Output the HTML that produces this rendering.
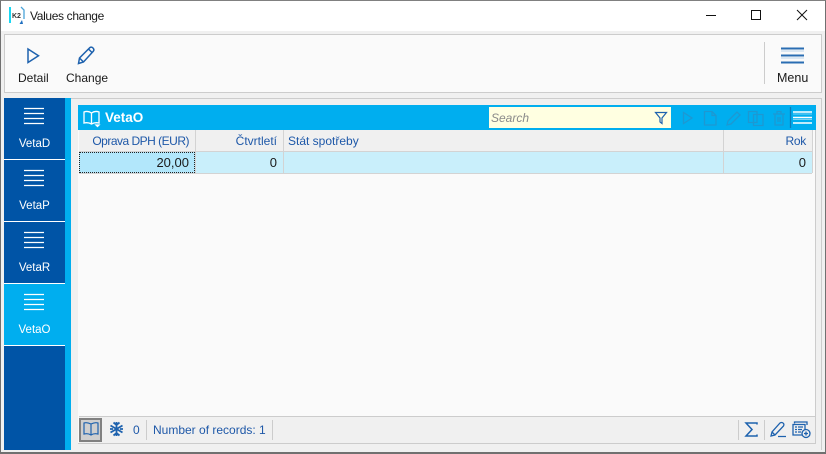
<!DOCTYPE html>
<html><head><meta charset="utf-8">
<style>
html,body{margin:0;padding:0;width:826px;height:454px;overflow:hidden;background:#f0f0f0}
body{position:relative;font-family:"Liberation Sans",sans-serif;font-size:12px;color:#1a1a1a}
.a,.t{position:absolute}
.t{white-space:nowrap;line-height:16px}
svg{position:absolute;overflow:visible}
.blue{color:#1e58a8}
.side{position:absolute;left:4px;width:61px;height:61px;border-bottom:1px solid #fff;color:#fff;text-align:center;font-size:11.5px}
.side .t{left:0;width:61px;top:38px}
.side svg{left:20px;top:10px}
</style></head><body>
<div class="a" style="left:0;top:0;width:826px;height:454px;box-sizing:border-box;border:1px solid #707070;border-bottom:2px solid #707070;border-top:1px solid #808080;z-index:9"></div>
<div class="a" style="left:1px;top:1px;width:824px;height:30px;background:#fff"></div>
<svg style="left:9px;top:6px" width="16" height="18" viewBox="0 0 16 18">
<rect x="0" y="1" width="2" height="16" fill="#19d7f2"/>
<path d="M12 1l3 3v9" fill="none" stroke="#4aa3d8" stroke-width="1.300"/>
<path d="M13 14l-2.500 4h3.500z" fill="#1e6fc0"/>
<text x="3" y="12" font-family="Liberation Sans" font-size="7" font-weight="bold" fill="#333">K2</text>
</svg>
<div class="t" style="left:30px;top:8px;letter-spacing:-.35px">Values change</div>
<svg style="left:706px;top:9px" width="110" height="14" fill="none" stroke="#111" stroke-width="1">
<path d="M0 6.500H10"/><rect x="45.500" y="1.500" width="9" height="9"/><path d="M91 1l10 10M101 1L91 11"/>
</svg>

<div class="a" style="left:4px;top:34px;width:816px;height:57px;background:#fafafa;border:1px solid #ccc"></div>
<svg style="left:27px;top:48px" width="14" height="16" fill="none" stroke="#1e62ae" stroke-width="1.500"><path d="M1 1V14.500L11.500 7.800Z"/></svg>
<svg style="left:77px;top:46px" width="20" height="20" fill="none" stroke="#1e62ae" stroke-width="1.500"><path d="M1.500 17.500l1-5.500L13 1.500q1.500-1 3 .5t.5 3L6.500 16ZM2.500 12l4 4M11.500 3l4 4"/></svg>
<div class="t" style="left:18px;top:70px">Detail</div>
<div class="t" style="left:66px;top:70px">Change</div>
<div class="a" style="left:764px;top:42px;width:1px;height:42px;background:#ccc"></div>
<svg style="left:781px;top:48px" width="24" height="16"><path d="M0 .5H23M0 7.500H23M0 14.500H23" stroke="#2a6db3" stroke-width="2" fill="none"/><path d="M0 3H23M0 10H23" stroke="#bcd4ea" stroke-width="1"/></svg>
<div class="t" style="left:777px;top:70px;font-size:12.500px">Menu</div>

<div class="a" style="left:4px;top:98px;width:61px;height:352px;background:#0054a6"></div>
<div class="a" style="left:65px;top:98px;width:6px;height:352px;background:#00aeef"></div>
<div class="a" style="left:71px;top:98px;width:751px;height:352px;background:#f0f0f0;border-top:1px solid #ccc;border-right:1px solid #ccc;box-sizing:border-box"></div>

<div class="side" style="top:98px"><svg width="21" height="18" stroke="#fff" stroke-width="1.200" fill="none"><path d="M0 .5H20M0 5.500H20M0 10.500H20M0 15.500H20"/></svg><div class="t">VetaD</div></div>
<div class="side" style="top:160px"><svg width="21" height="18" stroke="#fff" stroke-width="1.200" fill="none"><path d="M0 .5H20M0 5.500H20M0 10.500H20M0 15.500H20"/></svg><div class="t">VetaP</div></div>
<div class="side" style="top:222px"><svg width="21" height="18" stroke="#fff" stroke-width="1.200" fill="none"><path d="M0 .5H20M0 5.500H20M0 10.500H20M0 15.500H20"/></svg><div class="t">VetaR</div></div>
<div class="side" style="top:284px;background:#00aeef"><svg width="21" height="18" stroke="#fff" stroke-width="1.200" fill="none"><path d="M0 .5H20M0 5.500H20M0 10.500H20M0 15.500H20"/></svg><div class="t">VetaO</div></div>

<div class="a" style="left:78px;top:105px;width:738px;height:339px;background:#fafafa;border-right:1px solid #ccc;border-bottom:1px solid #ccc;box-sizing:border-box"></div>
<div class="a" style="left:78px;top:105px;width:738px;height:25px;background:#00aeef"></div>
<svg style="left:83px;top:110px" width="18" height="16" fill="none" stroke="#fff" stroke-width="1.300"><path d="M8.500 3Q5 .5 1 2V13Q5 12 8.500 14Q12 12 16 13V2Q12 .5 8.500 3ZM8.500 3V14M13 15H16L14.500 16.500Z"/></svg>
<div class="t" style="left:105px;top:110px;color:#fff;font-weight:bold;font-size:13.500px">VetaO</div>
<div class="a" style="left:489px;top:107px;width:182px;height:21px;background:#ffffe1"></div>
<div class="t" style="left:491px;top:110px;font-style:italic;color:#8a8a8a">Search</div>
<svg style="left:655px;top:112px" width="12" height="12" fill="none" stroke="#1e62ae" stroke-width="1.200"><path d="M.5 .5H11.500L7 6V11.500L5 10V6Z"/></svg>
<svg style="left:681px;top:110px" width="112" height="16" fill="none" stroke="#1d98d2" stroke-width="1.300">
<path d="M2.500 2.500V13.500L11 8Z"/><path d="M23.500 1.500H31L35 5.500V15H23.500ZM31 1.500V5.500H35"/><path d="M46 15l1-4 9-9 3 3-9 9Z"/><path d="M67.500 1.500H76V12.500H67.500ZM72.500 4.500H82V15.500H72.500Z"/><path d="M92 4H104M94 4V15H102V4M96 4V1.500H100V4M97 7V12M99 7V12"/>
<path d="M109.500 -3V18" stroke="#0f7cb8"/>
</svg>
<svg style="left:793px;top:111px" width="20" height="14"><path d="M0 1H19M0 6.500H19M0 12H19" stroke="#fff" stroke-width="1.600"/><path d="M0 3H19M0 8.500H19" stroke="#7ad3f5" stroke-width="1"/></svg>

<div class="a" style="left:79px;top:130px;width:733px;height:21px;background:#f0f0f0;border-bottom:1px solid #d3d3d3"></div>
<div class="a" style="left:79px;top:152px;width:733px;height:21px;background:#c9effb;border-bottom:1px solid #d3d3d3"></div>
<div class="a" style="left:79px;top:152px;width:116px;height:21px;background:#b2e7fb;outline:1px dotted #222;outline-offset:-1px"></div>
<div class="a" style="left:195px;top:130px;width:1px;height:43px;background:#d3d3d3"></div>
<div class="a" style="left:283px;top:130px;width:1px;height:43px;background:#d3d3d3"></div>
<div class="a" style="left:723px;top:130px;width:1px;height:43px;background:#d3d3d3"></div>
<div class="a" style="left:812px;top:130px;width:1px;height:43px;background:#d3d3d3"></div>
<div class="t blue" style="right:637px;top:133px;letter-spacing:-.5px">Oprava DPH (EUR)</div>
<div class="t blue" style="right:549px;top:133px">Čtvrtletí</div>
<div class="t blue" style="left:288px;top:133px">Stát spotřeby</div>
<div class="t blue" style="right:20px;top:133px;letter-spacing:-.3px">Rok</div>
<div class="t" style="right:637px;top:155px;font-size:13px">20,00</div>
<div class="t" style="right:549px;top:155px;font-size:13px">0</div>
<div class="t" style="right:20px;top:155px;font-size:13px">0</div>

<div class="a" style="left:79px;top:416px;width:736px;height:27px;background:#f0f0f0;border-top:1px solid #ccc;box-sizing:border-box"></div>
<div class="a" style="left:79px;top:418px;width:23px;height:24px;background:#cfcfcf;border:2px solid #808080;box-sizing:border-box"></div>
<svg style="left:83px;top:422px" width="17" height="14" fill="none" stroke="#1e62ae" stroke-width="1.200"><path d="M8 2Q4 0 1 1V12Q5 11 8 13Q11 11 15 12V1Q12 0 8 2ZM8 2V13"/></svg>
<svg style="left:109px;top:421px" width="15" height="16" fill="none" stroke="#1e62ae" stroke-width="1.800"><path d="M7.500 1V15M1.500 4.500L13.500 11.500M13.500 4.500L1.500 11.500M4.500 1.500L7.500 4 10.500 1.500M4.500 14.500L7.500 12 10.500 14.500M1 8H4M11 8H14"/></svg>
<div class="t blue" style="left:133px;top:422px">0</div>
<div class="a" style="left:146px;top:420px;width:1px;height:20px;background:#ccc"></div>
<div class="t blue" style="left:153px;top:422px">Number of records: 1</div>
<div class="a" style="left:272px;top:420px;width:1px;height:20px;background:#ccc"></div>
<div class="a" style="left:738px;top:420px;width:1px;height:20px;background:#ccc"></div>
<div class="a" style="left:764px;top:420px;width:1px;height:20px;background:#ccc"></div>
<svg style="left:745px;top:422px" width="14" height="15" fill="none" stroke="#1e62ae" stroke-width="1.500"><path d="M12 2.500V1H1L7 7.500 1 14H12V12.500"/></svg>
<svg style="left:770px;top:421px" width="17" height="17" fill="none" stroke="#1e62ae" stroke-width="1.300"><path d="M1 15l1-4L10 2q1.500-1 3 0t.500 3L5 14ZM2 11l3 3M8 15.500H16"/></svg>
<svg style="left:792px;top:421px" width="20" height="18" fill="none" stroke="#1e62ae" stroke-width="1.300"><path d="M2.500 2.500V1H15V4M1 3.500H13V14H1ZM3 6H5M6 6H11M3 8.500H5M6 8.500H10M3 11H5M6 11H9"/><circle cx="14" cy="12.500" r="4" fill="#f0f0f0"/><path d="M12 12.500H16M14 10.500V14.500"/></svg>
</body></html>
